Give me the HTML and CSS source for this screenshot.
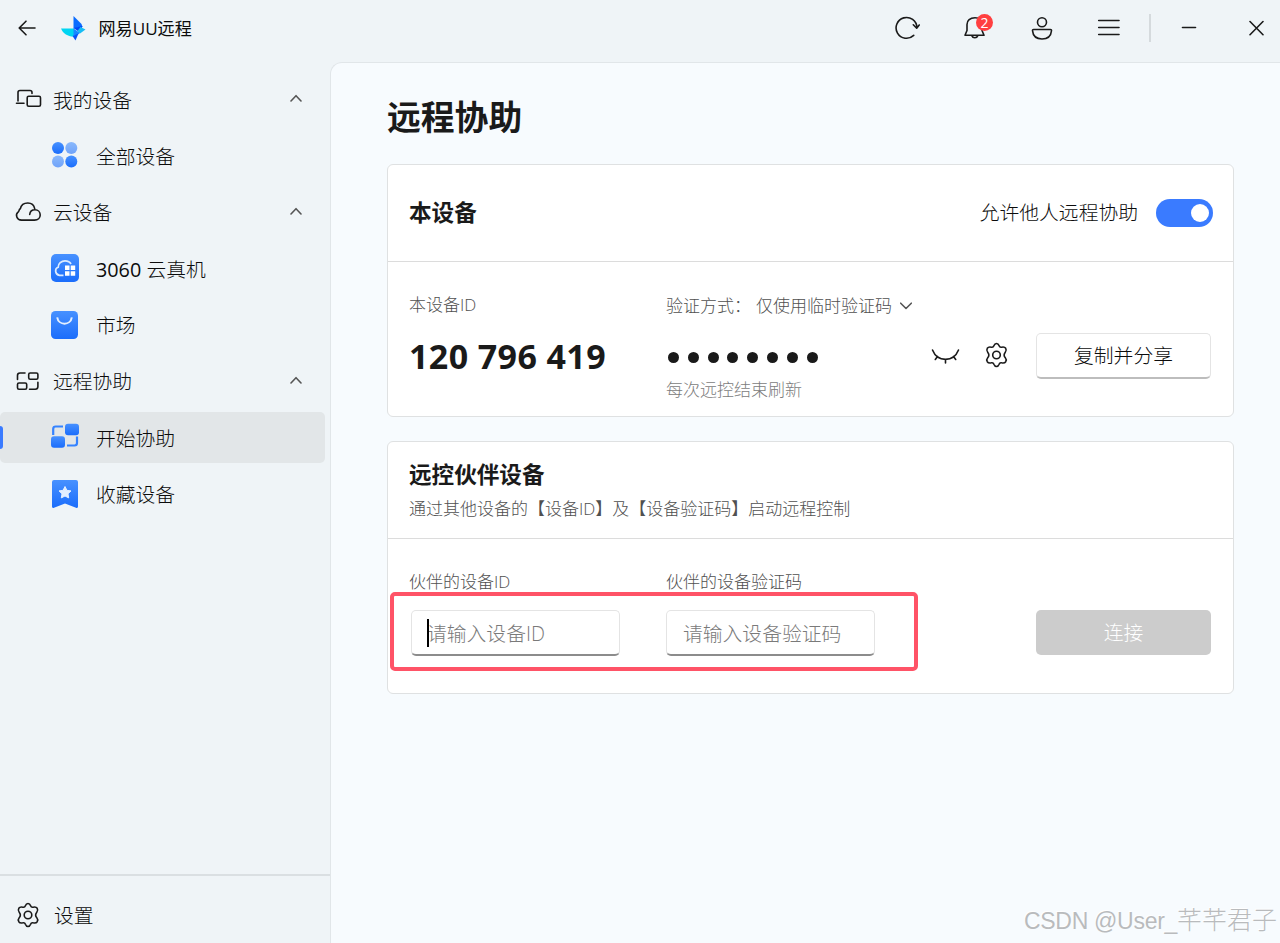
FILE: index.html
```html
<!DOCTYPE html>
<html lang="zh-CN">
<head>
    <meta charset="utf-8">
    <title>网易UU远程</title>
    <link rel="stylesheet" href="styles.css">
</head>
<body>
    <!-- shared gradient and gear -->
    <svg class="defs" width="0" height="0">
        <defs>
            <linearGradient id="blue" x1="0" y1="0" x2="0" y2="1">
                <stop offset="0" stop-color="#4791ff"/>
                <stop offset="1" stop-color="#1b6dfb"/>
            </linearGradient>
            <symbol id="gear" viewBox="0 0 24 26">
                <path d="M12 1.5C13.5 1.5 14.2 2.6 14.6 3.7C15 4.9 16 5.5 17.2 5.2C18.7 4.9 20.2 4.8 21.2 6.3C22.2 7.9 21.8 9 20.8 10.2C19.3 12 19.3 14 20.8 15.8C21.8 17 22.2 18.1 21.2 19.7C20.2 21.2 18.7 21.1 17.2 20.8C16 20.5 15 21.1 14.6 22.3C14.2 23.4 13.5 24.5 12 24.5C10.5 24.5 9.8 23.4 9.4 22.3C9 21.1 8 20.5 6.8 20.8C5.3 21.1 3.8 21.2 2.8 19.7C1.8 18.1 2.2 17 3.2 15.8C4.7 14 4.7 12 3.2 10.2C2.2 9 1.8 7.9 2.8 6.3C3.8 4.8 5.3 4.9 6.8 5.2C8 5.5 9 4.9 9.4 3.7C9.8 2.6 10.5 1.5 12 1.5Z"/>
                <circle cx="12" cy="13" r="3.8"/>
            </symbol>
        </defs>
    </svg>

    <div class="topbar">
        <svg class="line back" width="18" height="16" viewBox="0 0 18 16"><path d="M17 8H1.5M8 1.2L1.2 8L8 14.8"/></svg>
        <svg class="logo" width="26" height="26" viewBox="0 0 26 26">
            <path fill="#00d5f2" d="M1 13.500L14 13.500L14 21.500C9 22 3 19 1 13.500Z"/>
            <path fill="#0a6cff" d="M13.500 1L21.500 9L22.500 12L13.500 13.500Z"/>
            <path fill="#0047f5" d="M13.500 13L22.500 11L20 17.500Z"/>
            <path fill="#16bdf5" d="M20.500 12L25.500 14.500L20 18.500L17.500 16Z"/>
            <path fill="#1688ff" d="M13.500 13.500L20 18L16.500 20.500L13.500 20.500Z"/>
            <path fill="#0754f8" d="M12.500 21L18.500 18.500L15.500 25.500Z"/>
        </svg>
        <span class="app-name">网易UU远程</span>
        <div class="tools">
            <svg class="line" width="26" height="26" viewBox="0 0 26 26"><path d="M18.700 20.400A10.400 10.400 0 1 1 21.900 12.500M18.300 9.800L21.700 13.200L24.200 10"/></svg>
            <div class="bell">
                <svg class="line" width="26" height="26" viewBox="0 0 26 26"><path d="M3 20.300L5 15.500V9.500C5 5.500 8 2.800 13 2.800C18 2.800 20 5.500 20 9.500V15.500L22 20.300ZM9.800 20.600A3.200 3.200 0 0 0 15.800 20.600"/></svg>
                <span class="badge">2</span>
            </div>
            <svg class="line" width="26" height="26" viewBox="0 0 26 26"><circle cx="13" cy="7.300" r="4.500"/><path d="M4.600 14.500H21.400Q22.600 14.500 22.500 15.700C22 21 18.300 24 13 24C7.700 24 4 21 3.500 15.700Q3.400 14.500 4.600 14.500Z"/></svg>
            <svg class="line" width="26" height="26" viewBox="0 0 26 26"><path d="M2.700 5.500H23M2.700 12.500H23M2.700 19.500H23"/></svg>
            <span class="split"></span>
            <svg class="line min" width="16" height="16" viewBox="0 0 16 16"><path d="M1.500 7.500H14.500"/></svg>
            <svg class="line" width="16" height="16" viewBox="0 0 16 16"><path d="M1 1.500L14 14.700M14 1.500L1 14.700"/></svg>
        </div>
    </div>

    <div class="layout">
        <div class="sidebar">
            <div class="menu">
                <div class="group">
                    <svg class="line" width="28" height="22" viewBox="0 0 28 22"><path d="M4 12V3.500Q4 1.500 6 1.500H16Q18 1.500 18 3.500V4.500M2.500 14.200H10"/><rect x="13.200" y="7.300" width="13.300" height="10" rx="1.500"/></svg>
                    <span>我的设备</span>
                    <svg class="line chev" width="12" height="8" viewBox="0 0 12 8"><path d="M1 7L6 1.700L11 7"/></svg>
                </div>
                <div class="item">
                    <svg width="28" height="28" viewBox="0 0 28 28"><g fill="url(#blue)"><circle cx="7" cy="7" r="6"/><circle cx="20.300" cy="20.500" r="6"/><circle cx="20.300" cy="7" r="6" opacity=".6"/><circle cx="7" cy="20.500" r="6" opacity=".6"/></g></svg>
                    <span>全部设备</span>
                </div>
                <div class="group">
                    <svg class="line" width="28" height="22" viewBox="0 0 28 22"><path d="M20.700 7.700C20 4.200 17.200 2 13.800 2C9.800 2 7 4.500 6.300 7.800C4.500 8.500 5.500 10.500 4 11.200C1.200 13.500 2.500 19.100 7.500 19.100H20.500C24 19.100 26.200 16.800 26.200 14C26.200 11 24 8.800 21 8.800C18 8.800 16 10.700 15.700 13.500"/></svg>
                    <span>云设备</span>
                    <svg class="line chev" width="12" height="8" viewBox="0 0 12 8"><path d="M1 7L6 1.700L11 7"/></svg>
                </div>
                <div class="item">
                    <svg width="28" height="28" viewBox="0 0 28 28"><rect width="28" height="28" rx="5" fill="url(#blue)"/><path d="M12.500 21.300H8.500C3.700 20.500 3.500 14.200 7.200 13.200C7 9.500 10.500 6.800 14 6.800C17 6.800 19 8 20 10" fill="none" stroke="#dcebff" stroke-width="1.700"/><path fill="#fff" d="M14 11.500h4.500v4.500h-4.500zM19.700 11.500h4.500v4.500h-4.500zM14 17.200h4.500v4.500h-4.500zM19.700 17.200h4.500v4.500h-4.500z"/></svg>
                    <span><b>3060</b> 云真机</span>
                </div>
                <div class="item">
                    <svg width="28" height="28" viewBox="0 0 28 28"><rect width="27" height="28" rx="4.500" fill="url(#blue)"/><path d="M6.200 6.300C7.500 14.800 19.500 14.800 20.800 6.300" fill="none" stroke="#e3efff" stroke-width="2"/></svg>
                    <span>市场</span>
                </div>
                <div class="group">
                    <svg class="line" width="28" height="22" viewBox="0 0 28 22"><path d="M3.500 9.500V5.500Q3.500 3 6 3H11M23.900 12.300V16.500Q23.900 19.300 21.200 19.300H15.500"/><rect x="14.700" y="3" width="9.200" height="6.300" rx="1.500"/><rect x="3.500" y="13" width="9.200" height="6.300" rx="1.500"/></svg>
                    <span>远程协助</span>
                    <svg class="line chev" width="12" height="8" viewBox="0 0 12 8"><path d="M1 7L6 1.700L11 7"/></svg>
                </div>
                <div class="item active">
                    <svg width="28" height="28" viewBox="0 0 28 28"><path d="M2.200 12V6Q2.200 3.500 4.700 3.500H12M26 13.500V20Q26 22.500 23.500 22.500H16" fill="none" stroke="#3583ff" stroke-width="2.200"/><rect x="14" y=".7" width="14" height="11.500" rx="3" fill="url(#blue)"/><rect x="0" y="13.200" width="14" height="11.500" rx="3" fill="url(#blue)"/></svg>
                    <span>开始协助</span>
                </div>
                <div class="item">
                    <svg width="28" height="28" viewBox="0 0 28 28"><path fill="url(#blue)" d="M3 0H25Q27 0 27 2V26.500Q27 28.500 25 27.700L14 23.500L3 27.700Q1 28.500 1 26.500V2Q1 0 3 0Z"/><path fill="#e3efff" stroke="#e3efff" stroke-linejoin="round" d="M14 6.500L15.900 10.300L20 10.900L17 13.800L17.700 17.900L14 16L10.300 17.900L11 13.800L8 10.900L12.100 10.300Z"/></svg>
                    <span>收藏设备</span>
                </div>
            </div>
            <div class="settings">
                <svg class="line" width="24" height="26"><use href="#gear"/></svg>
                <span>设置</span>
            </div>
        </div>

        <div class="main">
            <h1>远程协助</h1>

            <div class="card">
                <div class="card-head">
                    <h2>本设备</h2>
                    <span class="allow">允许他人远程协助</span>
                    <span class="toggle"></span>
                </div>
                <div class="card-body">
                    <div class="col">
                        <div class="label">本设备ID</div>
                        <div class="device-id">120 796 419</div>
                    </div>
                    <div class="col-code">
                        <div class="label method">
                            <span>验证方式：</span>
                            <span>仅使用临时验证码</span>
                            <svg class="line" width="12" height="8" viewBox="0 0 12 8"><path d="M.700 1.200L6 6.500L11.300 1.200"/></svg>
                        </div>
                        <div class="dots"><i></i><i></i><i></i><i></i><i></i><i></i><i></i><i></i></div>
                        <div class="hint">每次远控结束刷新</div>
                    </div>
                    <div class="actions">
                        <svg class="line" width="30" height="18" viewBox="0 0 30 18"><path d="M2.500 3C7.500 15.500 23.500 15.500 28.500 3M7.500 9.500L5.300 12.500M15.500 12.500V16M23.500 9.500L25.700 12.500"/></svg>
                        <svg class="line gear" width="25" height="26"><use href="#gear"/></svg>
                        <button class="btn">复制并分享</button>
                    </div>
                </div>
            </div>

            <div class="card">
                <div class="card-head partner">
                    <h2>远控伙伴设备</h2>
                    <p>通过其他设备的【设备ID】及【设备验证码】启动远程控制</p>
                </div>
                <div class="card-body form">
                    <div class="col">
                        <div class="label">伙伴的设备ID</div>
                        <div class="field first"><span class="caret"></span>请输入设备ID</div>
                    </div>
                    <div class="col-code">
                        <div class="label">伙伴的设备验证码</div>
                        <div class="field">请输入设备验证码</div>
                    </div>
                    <button class="btn disabled">连接</button>
                    <div class="mark"></div>
                </div>
            </div>
        </div>
    </div>
    <div class="watermark"><span>CSDN @User_</span>芊芊君子</div>
</body>
</html>
```
FILE: styles.css
```css
* {
    box-sizing: border-box;
}

body {
    margin: 0;
    height: 943px;
    overflow: hidden;
    position: relative;
    display: flex;
    flex-direction: column;
    background: #eff4f7;
    color: #0c0c0c;
    font-family: "Open Sans", "Noto Sans CJK SC", sans-serif;
    font-size: 19.8px;
    font-weight: 300;
}

h1, h2, p {
    margin: 0;
}

h1, h2 {
    color: #1a1a1a;
    font-weight: 700;
}

svg {
    display: block;
    flex: none;
}

.defs {
    position: absolute;
}

.line {
    fill: none;
    stroke: #1a1a1a;
    stroke-width: 1.6;
    stroke-linecap: round;
    stroke-linejoin: round;
}

/* top bar */
.topbar {
    height: 62px;
    padding: 0 15px 6px 18px;
    display: flex;
    align-items: center;
    flex: none;
}

.logo {
    margin-left: 24px;
}

.app-name {
    margin-left: 12.5px;
    font-size: 17.1px;
    font-weight: 400;
    line-height: 24px;
    padding-top: 1px;
}

.tools {
    margin-left: auto;
    display: flex;
    align-items: center;
}

.tools > svg:first-child,
.bell {
    margin-right: 41px;
}

.tools > svg:nth-child(3) {
    margin-right: 41px;
}

.bell {
    position: relative;
}

.badge {
    position: absolute;
    left: 14px;
    top: -1px;
    width: 17px;
    height: 17px;
    border-radius: 50%;
    background: #ff3f40;
    color: #fff;
    font-size: 14px;
    font-weight: 400;
    line-height: 17px;
    text-align: center;
}

.split {
    width: 2px;
    height: 28px;
    margin: 0 30px 0 27px;
    background: #d5dadd;
}

.min {
    margin-right: 52px;
}

/* sidebar */
.layout {
    flex: 1;
    display: flex;
}

.sidebar {
    width: 330px;
    display: flex;
    flex-direction: column;
}

.menu {
    padding: 12px 5px 0 0;
    display: grid;
    grid-auto-rows: 51px;
    gap: 5.4px;
    flex: 1;
    align-content: start;
}

.group, .item {
    display: flex;
    align-items: center;
    line-height: 28px;
}

.group {
    padding-left: 14px;
}

.group span {
    margin-left: 11px;
    padding-top: 2px;
}

.chev {
    margin: 0 23px 3px auto;
    stroke: #555;
}

.item {
    padding-left: 51px;
}

.item svg {
    margin-bottom: 1px;
}

.item span {
    margin-left: 17px;
    padding-top: 2px;
}

.item b {
    font-weight: 400;
}

.active {
    position: relative;
    background: #e2e6e8;
    border-radius: 5px;
}

.active::before {
    content: '';
    position: absolute;
    left: 0;
    top: 14px;
    width: 3px;
    height: 23px;
    background: #3a7bff;
    border-radius: 0 3px 3px 0;
}

.settings {
    height: 69px;
    border-top: 2px solid #dadfe2;
    display: flex;
    align-items: center;
    padding: 10px 0 0 16px;
}

.settings span {
    margin-left: 14px;
    line-height: 28px;
    padding-top: 3px;
}

/* main panel */
.main {
    flex: 1;
    padding: 29px 46px 0 56px;
    background: #f7fbfe;
    border: 1px solid #e1e6e9;
    border-width: 1px 0 0 1px;
    border-radius: 12px 0 0 0;
}

h1 {
    height: 72px;
    font-size: 33.8px;
    line-height: 50px;
}

h2 {
    font-size: 22.6px;
    line-height: 30px;
}

.card {
    height: 253px;
    margin-bottom: 24px;
    background: #fff;
    border: 1px solid #dfe1e2;
    border-radius: 6px;
}

.card-head {
    height: 97px;
    display: flex;
    align-items: center;
    padding: 0 20px 0 21px;
    border-bottom: 1px solid #dcdcdc;
}

.allow {
    margin-left: auto;
    line-height: 28px;
}

.toggle {
    width: 57px;
    height: 28px;
    margin-left: 18px;
    padding: 5px 4px;
    border-radius: 14px;
    background: #3a7bff;
}

.toggle::after {
    content: '';
    display: block;
    width: 18px;
    height: 18px;
    margin-left: auto;
    border-radius: 50%;
    background: #fff;
}

.partner {
    display: block;
    padding-top: 18px;
}

.partner p {
    margin-top: 6px;
    font-size: 17px;
    line-height: 26px;
    color: #505050;
}

.card-body {
    display: flex;
    padding: 30px 22px 0 21px;
}

.col {
    width: 257px;
    flex: none;
}

.label {
    font-size: 17px;
    line-height: 26px;
    color: #505050;
    white-space: nowrap;
}

.device-id {
    margin-top: 16px;
    font-size: 34px;
    line-height: 44px;
    font-weight: 700;
    letter-spacing: 0.4px;
    color: #1a1a1a;
}

.method {
    display: flex;
    align-items: center;
    padding-top: 1px;
}

.method span + span {
    margin-left: 5px;
}

.method svg {
    margin-left: 8px;
    stroke: #555;
}

.dots {
    height: 44px;
    margin-top: 16px;
    padding-left: 2px;
    display: flex;
    align-items: center;
    gap: 8.8px;
}

.dots i {
    width: 11px;
    height: 11px;
    border-radius: 50%;
    background: #1a1a1a;
}

.hint {
    font-size: 17px;
    line-height: 22px;
    color: #7c7c7c;
}

.actions {
    display: flex;
    align-items: center;
    height: 46px;
    margin: 41px 0 0 auto;
}

.gear {
    margin: 0 27px 2px 24px;
}

.btn {
    width: 175px;
    height: 46px;
    flex: none;
    padding: 0;
    border: 1px solid #e4e4e4;
    border-bottom: 2px solid #bdbdbd;
    border-radius: 5px;
    background: #fff;
    color: #0c0c0c;
    font: inherit;
    line-height: 28px;
}

.form {
    position: relative;
}

.field {
    width: 209px;
    height: 46px;
    margin-top: 15px;
    padding-left: 16px;
    border: 1px solid #e4e4e4;
    border-bottom: 2px solid #8c8c8c;
    border-radius: 5px;
    background: #fff;
    color: #7a7a7a;
    line-height: 45px;
    white-space: nowrap;
}

.first {
    position: relative;
    margin-left: 2px;
    padding-left: 15px;
}

.caret {
    position: absolute;
    left: 15px;
    top: 8px;
    width: 2px;
    height: 28px;
    background: #000;
}

.disabled {
    margin: 41px 0 0 auto;
    height: 45px;
    border: 0;
    background: #ccc;
    color: #fff;
}

/* red frame round the two inputs */
.mark {
    position: absolute;
    left: 2px;
    top: 53px;
    width: 528px;
    height: 79px;
    border: 4px solid #ff5367;
    border-radius: 5px;
}

.watermark {
    position: absolute;
    right: 3px;
    bottom: 4px;
    font-family: "Liberation Sans", "Noto Sans CJK SC", sans-serif;
    font-size: 25px;
    line-height: 36px;
    color: #b9bbbd;
    text-shadow: -1px -1px 0 #fff;
}

.watermark span {
    font-size: 23px;
    letter-spacing: -0.3px;
}
```
